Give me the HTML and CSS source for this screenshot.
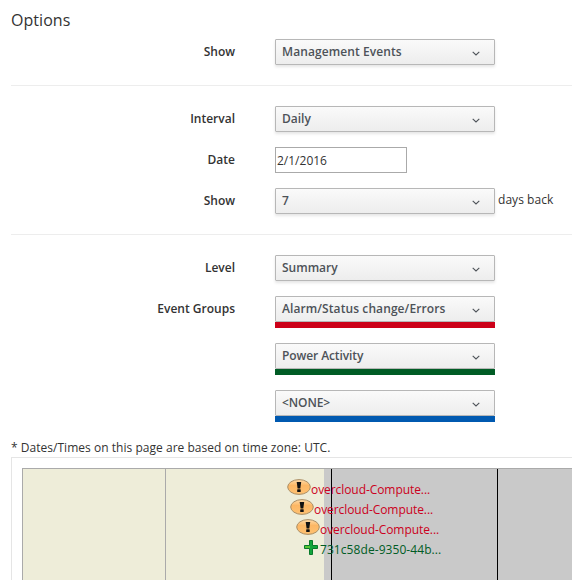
FILE: index.html
```
<!DOCTYPE html>
<html lang="en">
<head>
<meta charset="utf-8">
<title>Timelines</title>
<link rel="stylesheet" href="styles.css">
</head>
<body>
<svg class="defs" width="0" height="0" aria-hidden="true">
  <defs>
    <linearGradient id="amber" x1="0" y1="0" x2="0" y2="1">
      <stop offset="0" stop-color="#ffdcaa"/>
      <stop offset=".4" stop-color="#fcb765"/>
      <stop offset="1" stop-color="#ffc273"/>
    </linearGradient>
    <symbol id="chevron" viewBox="0 0 8 5"><path d="M.7.900 4 4 7.300.900" fill="none" stroke="#4d5258" stroke-width="1.100"/></symbol>
    <symbol id="warn" viewBox="0 0 24 16">
      <ellipse cx="12" cy="8" rx="11.3" ry="7.4" fill="url(#amber)" stroke="#a98f68" stroke-width="1"/>
      <path d="M9.700 3h4.500l-.9 6.500h-2.700z" fill="#111"/><rect x="10.200" y="10.300" width="3.500" height="2.800" rx=".4" fill="#111"/>
    </symbol>
    <symbol id="plus" viewBox="0 0 14 15">
      <path d="M5.500.5h3v5h5v3h-5v6h-3v-6h-5v-3h5z" fill="#12a53b" stroke="#087a2a"/>
      <path d="M1 7h5" stroke="#6fd035" stroke-width="1.500"/>
    </symbol>
  </defs>
</svg>
<main class="page">
  <h3 class="title">Options</h3>
  <section class="group">
    <div class="row"><label class="label">Show</label><div class="select wide">Management Events<svg class="chevron"><use href="#chevron"/></svg></div></div>
  </section>
  <section class="group">
    <div class="row"><label class="label">Interval</label><div class="select">Daily<svg class="chevron"><use href="#chevron"/></svg></div></div>
    <div class="row"><label class="label">Date</label><input class="date" type="text" value="2/1/2016"></div>
    <div class="row"><label class="label">Show</label><div class="select">7<svg class="chevron"><use href="#chevron"/></svg></div><span class="suffix">days back</span></div>
  </section>
  <section class="group last">
    <div class="row"><label class="label">Level</label><div class="select">Summary<svg class="chevron"><use href="#chevron"/></svg></div></div>
    <div class="row"><label class="label">Event Groups</label><div class="bar red"><div class="select">Alarm/Status change/Errors<svg class="chevron"><use href="#chevron"/></svg></div></div></div>
    <div class="row"><span class="label"></span><div class="bar green"><div class="select tight">Power Activity<svg class="chevron"><use href="#chevron"/></svg></div></div></div>
    <div class="row"><span class="label"></span><div class="bar blue"><div class="select tight">&lt;NONE&gt;<svg class="chevron"><use href="#chevron"/></svg></div></div></div>
  </section>
  <p class="note">* Dates/Times on this page are based on time zone: UTC.</p>
  <div class="frame">
    <div class="timeline">
      <i class="tick t1"></i><i class="tick t2"></i><i class="tick t3"></i>
      <div class="event e1"><svg class="warn"><use href="#warn"/></svg><span>overcloud-Compute...</span></div>
      <div class="event e2"><svg class="warn"><use href="#warn"/></svg><span>overcloud-Compute...</span></div>
      <div class="event e3"><svg class="warn"><use href="#warn"/></svg><span>overcloud-Compute...</span></div>
      <div class="event e4"><svg class="plus"><use href="#plus"/></svg><span>731c58de-9350-44b...</span></div>
    </div>
  </div>
</main>
</body>
</html>
```
FILE: styles.css
```
* { box-sizing: border-box; }
body {
  margin: 0;
  height: 580px;
  overflow: hidden;
  background: #fff;
  color: #333;
  font: 12px/20px "Open Sans", sans-serif;
}
.defs { position: absolute; }
.page { padding: 10px 0 0 11px; }
.title { margin: 0 0 9px; font-size: 16px; line-height: 20px; font-weight: 400; letter-spacing: .05px; }
.group {
  display: flex;
  flex-direction: column;
  gap: 15px;
  padding-bottom: 20px;
  margin-bottom: 20px;
  border-bottom: 1px solid #ededed;
}
.group.last { padding: 0; margin: 0 0 16px; border: 0; }
.row { display: flex; align-items: flex-start; }
.label { width: 224px; margin-right: 40px; padding-top: 3px; text-align: right; font-weight: 600; }
.select {
  display: flex;
  align-items: center;
  justify-content: space-between;
  width: 220px;
  height: 26px;
  padding: 0 14.5px 1px 6px;
  border: 1px solid #b7b7b7;
  border-radius: 1px;
  background: linear-gradient(#fafafa, #ededed);
  box-shadow: 0 2px 3px rgba(3, 3, 3, .1);
  color: #4d5258;
  font-weight: 600;
}
.wide, .red .select { letter-spacing: .09px; }
.tight { letter-spacing: -.09px; }
.chevron { width: 8px; height: 5px; margin-top: 3px; }
.bar { border-bottom: 6px solid; }
.bar .select { box-shadow: none; }
.red { border-color: #cc0018; }
.green { border-color: #005c25; }
.blue { border-color: #0059b0; }
.date {
  width: 132px;
  height: 26px;
  padding: 1px 1px 0;
  border: 1px solid #aaa;
  color: #333;
  font: inherit;
}
.suffix { margin-left: 3px; padding-top: 2px; letter-spacing: .05px; }
.note { margin: 0 0 -1px; letter-spacing: .03px; }
.frame { height: 140px; padding: 10px 0 0 10px; border: solid #e5e5e5; border-width: 1px 0 0 1px; }
.timeline {
  position: relative;
  height: 130px;
  border: solid #aaa;
  border-width: 1px 0 0 1px;
  background: linear-gradient(90deg, #eeedd9 301px, #c9c9c9 301px);
}
.tick { position: absolute; top: 0; bottom: 0; width: 1px; background: #000; }
.t1 { left: 142px; background: #aaa; }
.t2 { left: 308px; }
.t3 { left: 474px; }
.event { position: absolute; display: flex; color: #cc0020; white-space: nowrap; letter-spacing: -.07px; }
.event span { margin-top: 1px; }
.e1 { left: 264px; top: 10px; }
.e2 { left: 267px; top: 30px; }
.e3 { left: 273px; top: 50px; }
.e4 { left: 281px; top: 70px; color: #005c25; letter-spacing: .07px; }
.warn { width: 24px; height: 16px; }
.plus { width: 14px; height: 15px; margin: 1px 2px 0 0; }
```
